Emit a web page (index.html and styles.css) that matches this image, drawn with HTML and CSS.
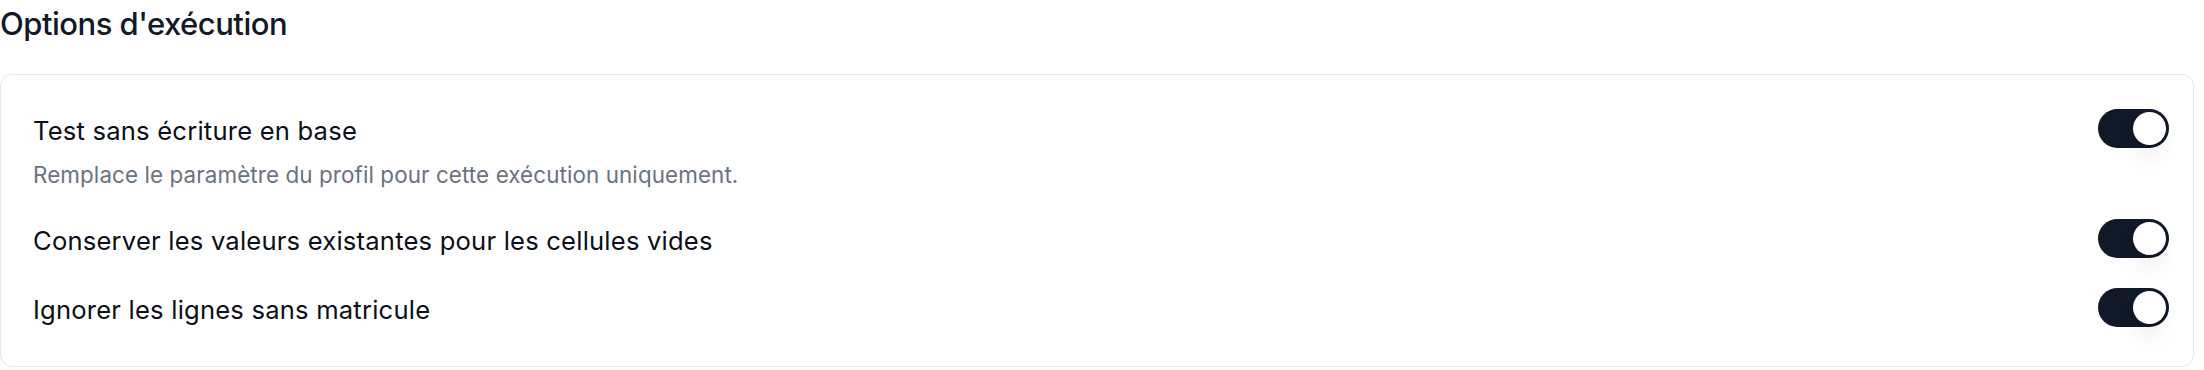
FILE: index.html
```html
<!DOCTYPE html>
<html lang="fr">
<head>
    <meta charset="UTF-8">
    <meta name="viewport" content="width=device-width, initial-scale=1.0">
    <title>Options d'exécution</title>
    <link rel="stylesheet" href="styles.css">
</head>
<body>
    <section class="run-options">
        <h3>Options d'exécution</h3>

        <div class="options-card">
            <div class="option-row">
                <div class="option-text">
                    <label for="dryRun">Test sans écriture en base</label>
                    <p class="option-hint">Remplace le paramètre du profil pour cette exécution uniquement.</p>
                </div>
                <button type="button" class="switch" id="dryRun" role="switch" aria-checked="true">
                    <span class="switch-thumb"></span>
                </button>
            </div>

            <div class="option-row">
                <div class="option-text">
                    <label for="keepValues">Conserver les valeurs existantes pour les cellules vides</label>
                </div>
                <button type="button" class="switch" id="keepValues" role="switch" aria-checked="true">
                    <span class="switch-thumb"></span>
                </button>
            </div>

            <div class="option-row">
                <div class="option-text">
                    <label for="skipRows">Ignorer les lignes sans matricule</label>
                </div>
                <button type="button" class="switch" id="skipRows" role="switch" aria-checked="true">
                    <span class="switch-thumb"></span>
                </button>
            </div>
        </div>
    </section>
</body>
</html>
```

FILE: styles.css
```css
* {
    box-sizing: border-box;
    margin: 0;
    padding: 0;
}

body {
    font-family: 'Inter', 'Noto Sans', sans-serif;
    color: #111827;
    background: #fff;
    padding-right: 10px;
}

h3 {
    font-size: 31px;
    line-height: 46px;
    font-weight: 500;
    letter-spacing: -0.5px;
    padding-top: 1px;
    margin-bottom: 27px;
}

.options-card {
    border: 1px solid #e5e7eb;
    border-radius: 12px;
    padding: 34px 24px 37px 32px;
    display: flex;
    flex-direction: column;
    gap: 28px;
}

.option-row {
    display: flex;
    justify-content: space-between;
    align-items: flex-start;
}

.option-text {
    padding-top: 3px;
}

.option-text label {
    display: block;
    font-size: 25.6px;
    line-height: 38px;
    letter-spacing: 0.2px;
    color: #0b0f19;
}

.option-hint {
    margin-top: 9px;
    font-size: 22.4px;
    line-height: 32px;
    letter-spacing: 0.1px;
    color: #6b7280;
}

.switch {
    width: 71px;
    height: 39px;
    flex-shrink: 0;
    border: none;
    border-radius: 999px;
    background: #111827;
    padding: 0 3px;
    display: flex;
    align-items: center;
    justify-content: flex-end;
    cursor: pointer;
}

.switch-thumb {
    width: 33px;
    height: 33px;
    border-radius: 50%;
    background: #fff;
    box-shadow: 0 16px 24px -5px rgba(0, 0, 0, 0.1), 0 6px 10px -6px rgba(0, 0, 0, 0.1);
}
```
